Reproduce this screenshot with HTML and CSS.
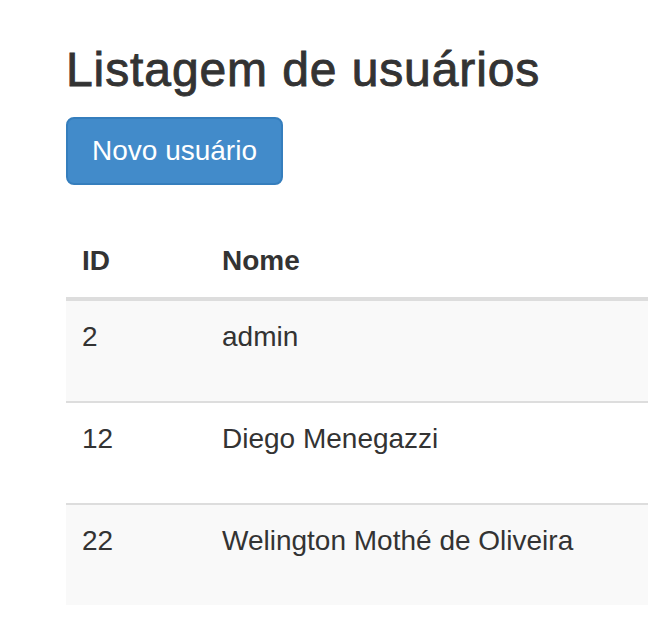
FILE: index.html
```html
<!DOCTYPE html>
<html lang="pt-BR">
<head>
<meta charset="utf-8">
<title>Listagem de usuários</title>
<link rel="stylesheet" href="styles.css">
</head>
<body>
<div class="container">
  <h3 class="title">Listagem de usuários</h3>
  <a class="btn btn-primary" href="#">Novo usuário</a>
  <table class="table">
    <thead>
      <tr><th class="col-id">ID</th><th>Nome</th></tr>
    </thead>
    <tbody>
      <tr><td>2</td><td>admin</td></tr>
      <tr><td>12</td><td>Diego Menegazzi</td></tr>
      <tr><td>22</td><td>Welington Mothé de Oliveira</td></tr>
    </tbody>
  </table>
</div>
</body>
</html>
```
FILE: styles.css
```css
html, body {
  margin: 0;
  padding: 0;
  background: #fff;
}
body {
  font-family: "Liberation Sans", Arial, Helvetica, sans-serif;
  font-size: 28px;
  line-height: 40px;
  color: #333;
  overflow: hidden;
}
.container {
  padding-left: 66px;
}
.title {
  margin: 44px 0 20px;
  font-size: 48px;
  line-height: 52.8px;
  font-weight: 500;
  letter-spacing: 0.9px;
  -webkit-text-stroke: 0.9px #333;
  color: #333;
}
.btn {
  display: inline-block;
  padding: 12px 24px;
  font-size: 28px;
  line-height: 40px;
  border: 2px solid transparent;
  border-radius: 8px;
  text-decoration: none;
}
.btn-primary {
  background: #428bca;
  border-color: #357ebd;
  color: #fff;
}
.table {
  width: 100%;
  margin-top: 40px;
  border-collapse: collapse;
  border-spacing: 0;
}
.table th,
.table td {
  text-align: left;
  vertical-align: top;
  padding: 16px;
  line-height: 40px;
}
.table th {
  font-weight: bold;
  border-bottom: 4px solid #ddd;
}
.table th.col-id {
  width: 108px;
}
.table td {
  padding-bottom: 44px;
  border-top: 2px solid #ddd;
}
.table tbody tr:nth-child(odd) td {
  background: #f9f9f9;
}
```
